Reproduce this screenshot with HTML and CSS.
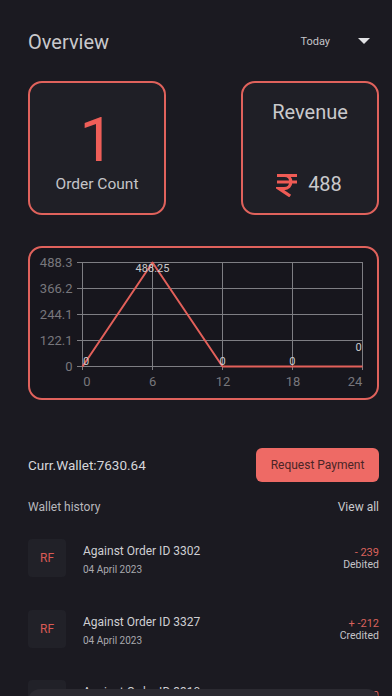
FILE: index.html
```html
<!DOCTYPE html>
<html lang="en">
<head>
<meta charset="utf-8">
<title>Overview</title>
<link rel="stylesheet" href="styles.css">
</head>
<body>
<main class="page">
  <header class="header">
    <h1 class="title">Overview</h1>
    <div class="range">
      <span class="range-label">Today</span>
      <span class="caret"></span>
    </div>
  </header>

  <section class="stats">
    <div class="stat-card stat-orders">
      <div class="big-number">1</div>
      <div class="stat-label">Order Count</div>
    </div>
    <div class="stat-card stat-revenue">
      <div class="revenue-title">Revenue</div>
      <div class="revenue-value">
        <svg class="rupee" width="22" height="24" viewBox="0 0 22 24" xmlns="http://www.w3.org/2000/svg" aria-label="₹">
          <path d="M1 2.5H21 M1 9H21 M1 2.5H8.5C12.5 2.5 14.8 5.5 14.8 9C14.8 12.5 12.2 15.6 8 15.6H3.2L14.2 23" fill="none" stroke="#ef5b55" stroke-width="3.2" stroke-linejoin="miter"/>
        </svg>
        <span class="amount">488</span>
      </div>
    </div>
  </section>

  <section class="chart-card">
    <svg class="chart" width="346" height="150" viewBox="0 0 346 150" xmlns="http://www.w3.org/2000/svg">
      <g class="grid" stroke="#7e7e83" stroke-width="1" fill="none">
        <line x1="47" y1="14.5" x2="333" y2="14.5"/>
        <line x1="47" y1="40.5" x2="333" y2="40.5"/>
        <line x1="47" y1="66.5" x2="333" y2="66.5"/>
        <line x1="47" y1="92.5" x2="333" y2="92.5"/>
        <line x1="47" y1="118.5" x2="333" y2="118.5"/>
        <line x1="52.5" y1="14" x2="52.5" y2="122"/>
        <line x1="122.5" y1="14" x2="122.5" y2="122"/>
        <line x1="192.5" y1="14" x2="192.5" y2="122"/>
        <line x1="262.5" y1="14" x2="262.5" y2="122"/>
        <line x1="332.5" y1="14" x2="332.5" y2="122"/>
      </g>
      <g class="y-labels" fill="#77767c" font-size="13" text-anchor="end">
        <text x="42.5" y="19">488.3</text>
        <text x="42.5" y="45">366.2</text>
        <text x="42.5" y="71">244.1</text>
        <text x="42.5" y="97">122.1</text>
        <text x="42.5" y="123">0</text>
      </g>
      <g class="x-labels" fill="#77767c" font-size="13">
        <text x="53.3" y="137.5" text-anchor="start">0</text>
        <text x="122.7" y="137.5" text-anchor="middle">6</text>
        <text x="193" y="137.5" text-anchor="middle">12</text>
        <text x="263" y="137.5" text-anchor="middle">18</text>
        <text x="332.3" y="137.5" text-anchor="end">24</text>
      </g>
      <polyline points="52.5,118.5 122.5,14.5 192.5,118.5 332.5,118.5" fill="none" stroke="#e3605a" stroke-width="2" stroke-linejoin="round"/>
      <g class="values" fill="#c9c9cc" font-size="11" text-anchor="middle">
        <text x="56" y="117">0</text>
        <text x="122.5" y="24">488.25</text>
        <text x="192.5" y="117">0</text>
        <text x="262.3" y="117">0</text>
        <text x="328.7" y="103">0</text>
      </g>
    </svg>
  </section>

  <section class="wallet">
    <div class="wallet-balance">Curr.Wallet:7630.64</div>
    <button class="request-btn" type="button">Request Payment</button>
  </section>

  <div class="history-head">
    <span class="history-title">Wallet history</span>
    <span class="view-all">View all</span>
  </div>

  <ul class="history">
    <li class="tx">
      <div class="tx-badge">RF</div>
      <div class="tx-info">
        <div class="tx-title">Against Order ID 3302</div>
        <div class="tx-date">04 April 2023</div>
      </div>
      <div class="tx-amount">
        <div class="tx-value">- 239</div>
        <div class="tx-type">Debited</div>
      </div>
    </li>
    <li class="tx">
      <div class="tx-badge">RF</div>
      <div class="tx-info">
        <div class="tx-title">Against Order ID 3327</div>
        <div class="tx-date">04 April 2023</div>
      </div>
      <div class="tx-amount">
        <div class="tx-value">+ -212</div>
        <div class="tx-type">Credited</div>
      </div>
    </li>
    <li class="tx">
      <div class="tx-badge">RF</div>
      <div class="tx-info">
        <div class="tx-title">Against Order ID 3310</div>
        <div class="tx-date">04 April 2023</div>
      </div>
      <div class="tx-amount tx-amount-low">
        <div class="tx-value">+ 120</div>
        <div class="tx-type">Credited</div>
      </div>
    </li>
  </ul>
</main>
<div class="sheet"></div>
</body>
</html>
```

FILE: styles.css
```css
* { box-sizing: border-box; }

html, body {
  margin: 0;
  padding: 0;
  background: #1b1a21;
  height: 696px;
  overflow: hidden;
  font-family: Roboto, "Noto Sans", "DejaVu Sans", sans-serif;
}

.page {
  padding: 30px 13px 0 28px;
}

.header {
  display: flex;
  align-items: center;
  justify-content: space-between;
  height: 24px;
}

.title {
  margin: 0;
  font-size: 20px;
  line-height: 24px;
  font-weight: 400;
  color: #c9c9cc;
}

.range {
  display: flex;
  align-items: center;
  gap: 28px;
  padding-right: 9px;
  margin-top: -2px;
}

.range-label {
  font-size: 11px;
  color: #c4c4c8;
}

.caret {
  width: 0;
  height: 0;
  border-left: 6px solid transparent;
  border-right: 6px solid transparent;
  border-top: 6px solid #e2e2e5;
}

.stats {
  display: flex;
  justify-content: space-between;
  margin-top: 27px;
}

.stat-card {
  width: 138px;
  height: 134px;
  border: 2px solid #e0625c;
  border-radius: 14px;
  background: #1f1f26;
  display: flex;
  flex-direction: column;
  align-items: center;
}

.stat-orders {
  padding-top: 26px;
}

.big-number {
  font-size: 62px;
  line-height: 62px;
  color: #ee5e58;
}

.stat-label {
  margin-top: 4px;
  font-size: 15.5px;
  line-height: 18px;
  color: #c4c4c8;
}

.stat-revenue {
  padding-top: 17px;
}

.revenue-title {
  font-size: 20px;
  line-height: 24px;
  color: #c9c9cc;
}

.revenue-value {
  margin-top: 46px;
  display: flex;
  align-items: center;
  gap: 10px;
  height: 28px;
  padding-right: 2px;
}

.rupee {
  display: block;
  margin-top: 2px;
}

.amount {
  font-size: 20px;
  line-height: 28px;
  color: #c9c9cc;
}

.chart-card {
  margin-top: 31px;
  height: 154px;
  border: 2px solid #e0625c;
  border-radius: 14px;
  background: #17161d;
}

.chart {
  display: block;
  font-family: Roboto, "Noto Sans", sans-serif;
}

.wallet {
  margin-top: 48px;
  display: flex;
  align-items: center;
  justify-content: space-between;
}

.wallet-balance {
  font-size: 13.5px;
  color: #d6d6da;
}

.request-btn {
  width: 123px;
  height: 34px;
  border: none;
  border-radius: 6px;
  background: #ee6a65;
  color: #4a2526;
  font-family: Roboto, "Noto Sans", sans-serif;
  font-size: 12px;
  padding: 0;
}

.history-head {
  margin-top: 17px;
  display: flex;
  justify-content: space-between;
  align-items: center;
  height: 16px;
  font-size: 12px;
}

.history-title {
  color: #b8b8bd;
}

.view-all {
  color: #c9c9cc;
}

.history {
  list-style: none;
  margin: 24px 0 0 0;
  padding: 0;
}

.tx {
  display: flex;
  align-items: flex-start;
  height: 38px;
  margin-bottom: 32.5px;
}

.tx-badge {
  width: 38px;
  height: 38px;
  flex: none;
  border-radius: 4px;
  background: #212128;
  color: #d95a55;
  font-size: 12px;
  display: flex;
  align-items: center;
  justify-content: center;
}

.tx-info {
  margin-left: 17px;
  padding-top: 4px;
  flex: 1;
}

.tx-title {
  font-size: 12px;
  line-height: 16px;
  color: #cfcfd3;
}

.tx-date {
  margin-top: 4px;
  font-size: 10px;
  line-height: 14px;
  color: #a9a9ae;
}

.tx-amount {
  padding-top: 8px;
  text-align: right;
}

.tx-amount-low {
  padding-top: 10px;
}

.tx-value {
  font-size: 11px;
  line-height: 12px;
  color: #d9625c;
}

.tx-type {
  font-size: 10.5px;
  line-height: 12px;
  color: #c4c4c8;
}

.sheet {
  position: fixed;
  left: 28px;
  right: 13px;
  top: 689px;
  height: 20px;
  background: #2b2a31;
  border-radius: 12px 12px 0 0;
}
```
